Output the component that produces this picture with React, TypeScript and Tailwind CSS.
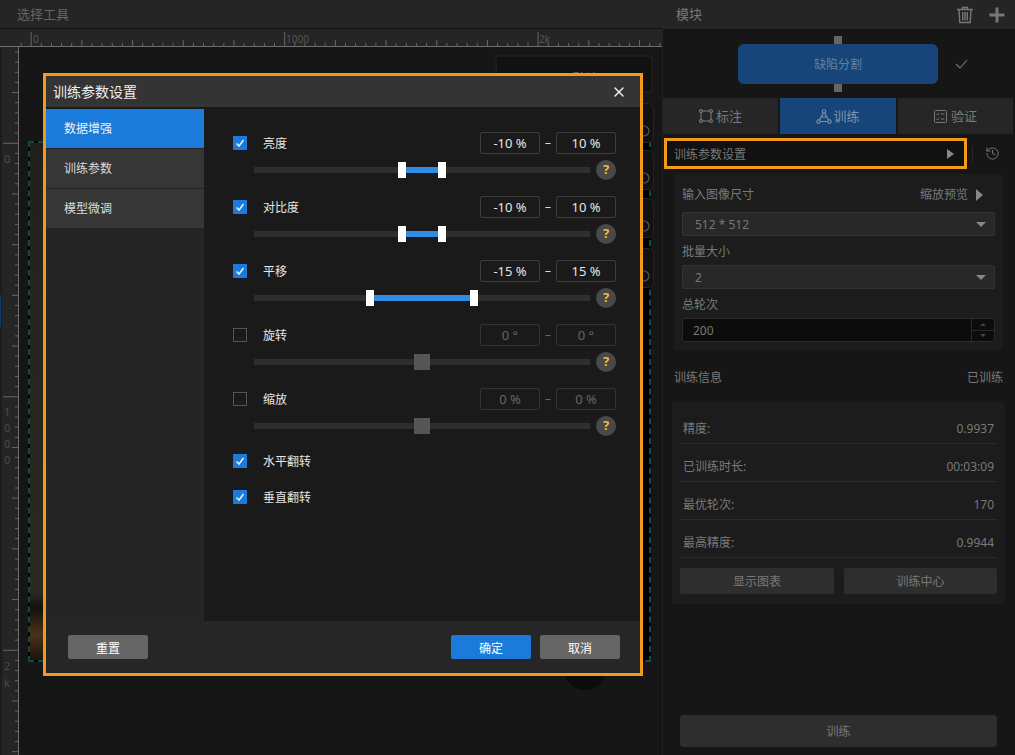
import { History, X } from 'lucide-react'

const rows = [
  { label: '亮度', on: true, from: '-10 %', to: '10 %', a: 144, b: 184 },
  { label: '对比度', on: true, from: '-10 %', to: '10 %', a: 144, b: 184 },
  { label: '平移', on: true, from: '-15 %', to: '15 %', a: 112, b: 216 },
  { label: '旋转', on: false, from: '0 °', to: '0 °', a: 0, b: 0 },
  { label: '缩放', on: false, from: '0 %', to: '0 %', a: 0, b: 0 },
]

const stats = [
  ['精度:', '0.9937'],
  ['已训练时长:', '00:03:09'],
  ['最优轮次:', '170'],
  ['最高精度:', '0.9944'],
]

const sideCards = [103, 150, 198, 248]

function Check({ on }: { on: boolean }) {
  if (!on) return <div className="w-[14px] h-[14px] border border-[#555] shrink-0" />
  return (
    <div className="w-[14px] h-[14px] bg-[#1a7bdb] shrink-0 flex items-center justify-center">
      <svg width="10" height="10" viewBox="0 0 10 10" fill="none" stroke="#e8f2fc" strokeWidth="1.5">
        <path d="M1.5 5.5 L4 8 L8.5 2" />
      </svg>
    </div>
  )
}

function RangeBox({ text, on }: { text: string; on: boolean }) {
  return (
    <div className={`w-[60px] h-[22px] pt-[2px] rounded-[2px] border flex items-center justify-center text-[13px] ${on ? 'border-[#3c3c3c] text-[#e6e6e6]' : 'border-[#333] text-[#666]'}`}>
      {text}
    </div>
  )
}

function SettingRow({ row }: { row: (typeof rows)[number] }) {
  return (
    <div>
      <div className="flex items-center h-[22px]">
        <Check on={row.on} />
        <span className="ml-4 pt-[2px] text-xs text-[#e6e6e6]">{row.label}</span>
        <div className="ml-auto flex items-center">
          <RangeBox text={row.from} on={row.on} />
          <span className={`w-4 text-center text-xs ${row.on ? 'text-[#ddd]' : 'text-[#666]'}`}>–</span>
          <RangeBox text={row.to} on={row.on} />
        </div>
      </div>
      <div className="flex items-center h-5 mt-[6px] pl-[21px]">
        <div className="relative w-[336px] h-[6px] bg-[#2e2e2e]">
          {row.on ? (
            <>
              <div className="absolute top-0 h-[6px] bg-[#2f8be6]" style={{ left: row.a + 8, width: row.b - row.a - 8 }} />
              <div className="absolute top-[-5px] w-2 h-4 bg-white" style={{ left: row.a }} />
              <div className="absolute top-[-5px] w-2 h-4 bg-white" style={{ left: row.b }} />
            </>
          ) : (
            <div className="absolute top-[-5px] left-[160px] w-4 h-4 bg-[#555]" />
          )}
        </div>
        <div className="ml-[6px] w-5 h-5 rounded-full bg-[#484848] flex items-center justify-center text-[13px] font-bold text-[#eebb44]">?</div>
      </div>
    </div>
  )
}

function Dialog() {
  return (
    <div className="absolute left-[43px] top-[73px] w-[600px] h-[603px] border-[3px] border-[#f39a1c] bg-[#1a1a1a] flex flex-col">
      <div className="h-[31px] shrink-0 bg-[#343434] flex items-center justify-between pl-[7px] pr-[13px]">
        <span className="text-[14px] text-[#eee]">训练参数设置</span>
        <X size={16} strokeWidth={2} color="#f0f0f0" />
      </div>
      <div className="flex flex-1 min-h-0">
        <div className="w-[158px] mt-[2px] bg-[#252525] flex flex-col gap-[1px]">
          <div className="h-[39px] bg-[#1a7bdb] flex items-center pl-[18px] text-xs text-[#f0f0f0]">数据增强</div>
          <div className="h-[39px] bg-[#363636] flex items-center pl-[18px] text-xs text-[#ddd]">训练参数</div>
          <div className="h-[39px] bg-[#363636] flex items-center pl-[18px] text-xs text-[#ddd]">模型微调</div>
        </div>
        <div className="flex-1 pt-[25px] pl-[29px] pr-[24px]">
          <div className="flex flex-col gap-4">
            {rows.map((r) => (
              <SettingRow key={r.label} row={r} />
            ))}
          </div>
          <div className="mt-[14px] flex flex-col gap-[14px]">
            <div className="flex items-center h-[22px]">
              <Check on />
              <span className="ml-4 pt-[2px] text-xs text-[#e6e6e6]">水平翻转</span>
            </div>
            <div className="flex items-center h-[22px]">
              <Check on />
              <span className="ml-4 pt-[2px] text-xs text-[#e6e6e6]">垂直翻转</span>
            </div>
          </div>
        </div>
      </div>
      <div className="h-[52px] shrink-0 bg-[#262626] flex items-center pl-[22px] pr-[20px] gap-[9px]">
        <button className="w-20 h-6 pt-[3px] rounded-[2px] bg-[#666] text-xs text-white mr-auto">重置</button>
        <button className="w-20 h-6 pt-[3px] rounded-[2px] bg-[#1a7bdb] text-xs text-white">确定</button>
        <button className="w-20 h-6 pt-[3px] rounded-[2px] bg-[#666] text-xs text-white">取消</button>
      </div>
    </div>
  )
}

function HorizontalRuler() {
  const ticks = Array.from({ length: 64 }, (_, i) => i)
  return (
    <svg width="662" height="17" className="block">
      <rect y="16" width="662" height="1" fill="#6e6e6e" />
      {ticks.map((i) => {
        const x = 20.5 + i * 10.14
        const major = (i - 1) % 25 === 0
        const mid = (i - 1) % 5 === 0
        return <rect key={i} x={x} y={major ? 2 : mid ? 10 : 13} width="1" height={major ? 14 : mid ? 6 : 3} fill="#666" />
      })}
      <text x="33" y="13" fontSize="10" fill="#555">0</text>
      <text x="286" y="13" fontSize="10" fill="#555">1000</text>
      <text x="539" y="13" fontSize="10" fill="#555">2k</text>
    </svg>
  )
}

function VerticalRuler() {
  const ticks = Array.from({ length: 70 }, (_, i) => i)
  return (
    <svg width="19" height="708" className="block">
      <rect width="2" height="708" fill="#1c1c1c" />
      <rect x="18" width="1" height="708" fill="#6e6e6e" />
      {ticks.map((i) => {
        const y = 4.5 + i * 10.14
        const major = (i - 9) % 25 === 0
        const mid = (i - 9) % 5 === 0
        return <rect key={i} x={major ? 3 : mid ? 12 : 15} y={y} width={major ? 15 : mid ? 6 : 3} height="1" fill="#666" />
      })}
      {[
        ['0', 116],
        ['1', 369],
        ['0', 385],
        ['0', 401],
        ['0', 417],
        ['2', 623],
        ['k', 640],
      ].map(([t, y], i) => (
        <text key={i} x="4" y={y} fontSize="11" fill="#4a4a4a">{t}</text>
      ))}
      <rect y="248" width="1" height="32" fill="#0f3a6a" />
    </svg>
  )
}

function Canvas() {
  return (
    <div className="relative flex-1 bg-[#161616] overflow-hidden">
      {/* image + overlays are placed on the free canvas */}
      <div className="absolute left-[476px] top-[8px] w-[158px] h-[38px] border-[2px] border-[#1c1c1c] bg-[#111] pl-[13px] pt-[12px] text-[13px] text-[#666] whitespace-nowrap">Make CPU默认 65</div>
      <div className="absolute left-[9px] top-[94px] w-[623px] h-[521px] border-2 border-dashed border-[#0e4a4a] bg-black">
        <div className="h-full w-[15px] bg-[linear-gradient(180deg,#211f19_0%,#26241d_30%,#2b281f_87%,#14110d_90%,#4a3218_95%,#1c130b_100%)]" />
      </div>
      {sideCards.map((top) => (
        <div key={top} className="absolute left-[601px] w-[34px] h-[40px] rounded-[6px] border border-[#242424] bg-[#111]" style={{ top: top - 47 }}>
          <svg className="absolute left-[17px] top-[21px]" width="12" height="12" viewBox="0 0 12 12" fill="none" stroke="#555" strokeWidth="1.2"><circle cx="6" cy="6" r="5" /></svg>
        </div>
      ))}
      <div className="absolute left-[544px] top-[599px] w-[44px] h-[44px] rounded-full bg-[#0c0c0c]" />
    </div>
  )
}

function PanelSelect({ text }: { text: string }) {
  return (
    <div className="h-6 rounded-[2px] border border-[#333] bg-[#282828] flex items-center pl-[12px] pr-[8px] text-xs text-[#777]">
      <span className="pt-[2px]">{text}</span>
      <div className="ml-auto w-0 h-0 border-x-[5px] border-x-transparent border-t-[5px] border-t-[#888]" />
    </div>
  )
}

function RightPanel() {
  return (
    <div className="w-[353px] h-full border-l border-[#222] bg-[#161616] flex flex-col text-[#7a7a7a]">
      <div className="h-[29px] shrink-0 bg-[#252525] flex items-center pl-[13px] pr-[10px]">
        <span className="text-[13px]">模块</span>
        <svg className="ml-auto" width="18" height="18" viewBox="0 0 18 18" fill="none" stroke="#777" strokeWidth="1.4">
          <path d="M1 3.5 H17 M6.5 3.5 V1.5 H11.5 V3.5 M3 3.5 L3.8 16.5 H14.2 L15 3.5 M6.7 6 V14.5 M9 6 V14.5 M11.3 6 V14.5" />
        </svg>
        <svg className="ml-[15px]" width="16" height="16" viewBox="0 0 16 16" fill="#777">
          <rect x="6.5" y="0.5" width="3" height="15" />
          <rect x="0.5" y="6.5" width="15" height="3" />
        </svg>
      </div>

      <div className="flex items-center pl-[75px] pt-[7px] pb-[6px] shrink-0">
        <div className="w-[200px] flex flex-col items-center">
          <div className="w-2 h-2 bg-[#666]" />
          <div className="w-full h-10 pt-[2px] rounded-[6px] bg-[#17457a] flex items-center justify-center text-xs text-[#66809c]">缺陷分割</div>
          <div className="w-2 h-2 bg-[#666]" />
        </div>
        <svg className="ml-[17px]" width="13" height="10" viewBox="0 0 13 10" fill="none" stroke="#777" strokeWidth="1.1">
          <path d="M1 5 L5 9 L12 1" />
        </svg>
      </div>

      <div className="flex gap-[2px] h-9 shrink-0 text-[13px]">
        <div className="w-[115px] bg-[#262626] flex items-center justify-center gap-[3px]">
          <svg width="14" height="14" viewBox="0 0 14 14" fill="none" stroke="#777" strokeWidth="1.1">
            <rect x="2" y="2" width="10" height="10" />
            <rect x="0.6" y="0.6" width="2.8" height="2.8" rx="1.2" fill="#262626" />
            <rect x="10.6" y="0.6" width="2.8" height="2.8" rx="1.2" fill="#262626" />
            <rect x="0.6" y="10.6" width="2.8" height="2.8" rx="1.2" fill="#262626" />
            <rect x="10.6" y="10.6" width="2.8" height="2.8" rx="1.2" fill="#262626" />
          </svg>
          <span className="pt-[2px]">标注</span>
        </div>
        <div className="w-[116px] bg-[#17457a] flex items-center justify-center gap-[1px] text-[#7b93ad]">
          <svg width="16" height="15" viewBox="0 0 16 15" fill="none" stroke="#7b93ad" strokeWidth="1.1">
            <path d="M8 3 L2.5 12.5 H13.5 Z M5.5 8 H10.5" />
            <circle cx="8" cy="2.5" r="1.7" fill="#17457a" />
            <circle cx="2.5" cy="12.5" r="1.7" fill="#17457a" />
            <circle cx="13.5" cy="12.5" r="1.7" fill="#17457a" />
          </svg>
          <span className="pt-[2px]">训练</span>
        </div>
        <div className="w-[115px] bg-[#262626] flex items-center justify-center gap-[4px]">
          <svg width="13" height="13" viewBox="0 0 13 13" fill="none" stroke="#777" strokeWidth="1">
            <rect x="0.5" y="0.5" width="12" height="12" rx="1" />
            <path d="M2.5 4 L3.5 5 L5 3 M7 4 H10.5 M2.5 9 L3.5 10 L5 8 M7 9 H10.5" />
          </svg>
          <span className="pt-[2px]">验证</span>
        </div>
      </div>

      <div className="mt-1 flex items-center shrink-0">
        <div className="ml-[1px] w-[303px] h-[31px] border-[3px] border-[#f39a1c] bg-[#111] flex items-center pl-[7px] pr-[10px] text-xs">
          <span className="pt-[2px]">训练参数设置</span>
          <div className="ml-auto w-0 h-0 border-y-[5px] border-y-transparent border-l-[7px] border-l-[#888]" />
        </div>
        <div className="ml-[5px] w-px h-4 bg-[#262626]" />
        <History className="ml-[12px]" size={15} strokeWidth={1.6} color="#777" />
      </div>

      <div className="mt-[5px] ml-[11px] w-[329px] h-[176px] shrink-0 rounded-[2px] bg-[#1c1c1c] px-2 pt-[11px] text-xs">
        <div className="h-[18px] pt-[2px] flex items-center">
          <span>输入图像尺寸</span>
          <span className="ml-auto mr-[8px]">缩放预览</span>
          <div className="mr-[12px] w-0 h-0 border-y-[6px] border-y-transparent border-l-[7px] border-l-[#888]" />
        </div>
        <div className="mt-[9px]"><PanelSelect text="512 * 512" /></div>
        <div className="mt-[6px] h-[18px] pt-[2px] flex items-center">批量大小</div>
        <div className="mt-[5px]"><PanelSelect text="2" /></div>
        <div className="mt-[6px] h-[18px] pt-[2px] flex items-center">总轮次</div>
        <div className="mt-[5px] h-6 rounded-[2px] border border-[#2a2a2a] bg-[#0c0c0c] flex items-center pl-[10px]">
          <span className="pt-[2px]">200</span>
          <div className="ml-auto w-[23px] h-full border-l border-[#2a2a2a] flex flex-col">
            <div className="flex-1 border-b border-[#2a2a2a] flex items-center justify-center">
              <div className="w-0 h-0 border-x-[3px] border-x-transparent border-b-[3px] border-b-[#444]" />
            </div>
            <div className="flex-1 flex items-center justify-center">
              <div className="w-0 h-0 border-x-[3px] border-x-transparent border-t-[3px] border-t-[#444]" />
            </div>
          </div>
        </div>
      </div>

      <div className="mt-[18px] ml-[11px] w-[329px] h-[18px] pt-[2px] shrink-0 flex items-center justify-between text-xs">
        <span>训练信息</span>
        <span>已训练</span>
      </div>

      <div className="mt-4 ml-[9px] w-[333px] h-[202px] shrink-0 rounded-[2px] bg-[#1c1c1c] px-2 pt-[11px] text-xs">
        <div className="flex flex-col gap-[7px]">
          {stats.map(([k, v]) => (
            <div key={k} className="h-[31px] pt-[1px] border-b border-[#2a2a2a] flex items-center justify-between pl-[3px] pr-[3px]">
              <span>{k}</span>
              <span>{v}</span>
            </div>
          ))}
        </div>
        <div className="mt-[10px] flex gap-[10px]">
          <button className="w-[154px] h-[26px] pt-[2px] rounded-[2px] bg-[#2e2e2e]">显示图表</button>
          <button className="w-[153px] h-[26px] pt-[2px] rounded-[2px] bg-[#2e2e2e]">训练中心</button>
        </div>
      </div>

      <button className="mt-auto mb-2 ml-[17px] w-[317px] h-8 pt-[2px] shrink-0 rounded-[4px] bg-[#2e2e2e] text-xs">训练</button>
    </div>
  )
}

export default function App() {
  return (
    <div className="relative w-[1015px] h-[755px] overflow-hidden flex bg-[#161616] font-['Noto_Sans','Noto_Sans_CJK_SC',sans-serif]">
      <div className="w-[662px] h-full flex flex-col">
        <div className="h-[29px] pt-[2px] shrink-0 bg-[#252525] border-b border-[#111] flex items-center pl-[17px] text-[13px] text-[#666]">选择工具</div>
        <div className="h-[18px] shrink-0 bg-[#252525] pt-[1px]">
          <HorizontalRuler />
        </div>
        <div className="flex flex-1 min-h-0">
          <div className="w-[19px] shrink-0 bg-[#252525]">
            <VerticalRuler />
          </div>
          <Canvas />
        </div>
      </div>
      <RightPanel />
      <Dialog />
    </div>
  )
}
